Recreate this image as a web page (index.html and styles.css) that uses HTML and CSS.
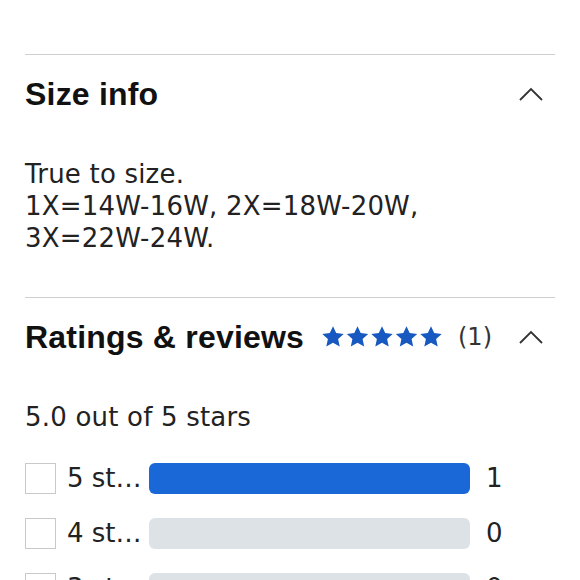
FILE: index.html
```html
<!DOCTYPE html>
<html lang="en">
<head>
<meta charset="utf-8">
<title>Size info and ratings</title>
<link rel="stylesheet" href="styles.css">
</head>
<body>
<main class="page">
  <section class="section">
    <div class="section-head">
      <h2 class="title">Size info</h2>
      <svg class="chevron" viewBox="0 0 24 14" width="24" height="14" aria-hidden="true"><path d="M1 13L12 2l11 11" fill="none" stroke="#333" stroke-width="1.8"/></svg>
    </div>
    <p class="body-text">True to size.<br>1X=14W-16W, 2X=18W-20W,<br>3X=22W-24W.</p>
  </section>
  <section class="section">
    <div class="section-head">
      <h2 class="title">Ratings &amp; reviews</h2>
      <div class="head-meta">
        <svg class="stars" viewBox="0 0 122 22" width="122" height="22" aria-label="5 stars">
          <defs>
            <path id="st" d="M11 0.3l3.2 6.8 7.5 0.8-5.6 5.1 1.6 7.5L11 16.7l-6.7 3.8 1.6-7.5-5.6-5.1 7.5-0.8z"/>
          </defs>
          <use href="#st" x="0" fill="#1759c0"/>
          <use href="#st" x="24.5" fill="#1759c0"/>
          <use href="#st" x="49" fill="#1759c0"/>
          <use href="#st" x="73.5" fill="#1759c0"/>
          <use href="#st" x="98" fill="#1759c0"/>
        </svg>
        <span class="count-total">(1)</span>
        <svg class="chevron" viewBox="0 0 24 14" width="24" height="14" aria-hidden="true"><path d="M1 13L12 2l11 11" fill="none" stroke="#333" stroke-width="1.8"/></svg>
      </div>
    </div>
    <p class="body-text">5.0 out of 5 stars</p>
    <ul class="dist">
      <li class="dist-row"><span class="box"></span><span class="label">5 stars</span><span class="bar"><span class="fill" style="width:100%"></span></span><span class="num">1</span></li>
      <li class="dist-row"><span class="box"></span><span class="label">4 stars</span><span class="bar"><span class="fill" style="width:0%"></span></span><span class="num">0</span></li>
      <li class="dist-row"><span class="box"></span><span class="label">3 stars</span><span class="bar"><span class="fill" style="width:0%"></span></span><span class="num">0</span></li>
      <li class="dist-row"><span class="box"></span><span class="label">2 stars</span><span class="bar"><span class="fill" style="width:0%"></span></span><span class="num">0</span></li>
    </ul>
  </section>
</main>
</body>
</html>
```

FILE: styles.css
```css
html, body {
  margin: 0;
  padding: 0;
  background: #fff;
  height: 580px;
  overflow: hidden;
}
.page {
  padding: 54px 25px 0;
  color: #222;
  font-family: "DejaVu Sans", sans-serif;
}
.section {
  border-top: 1px solid #cfcfcf;
  padding: 19px 0 43px;
}
.section-head {
  display: flex;
  align-items: center;
  justify-content: space-between;
  height: 40px;
}
.title {
  margin: 0;
  font-family: "Liberation Sans", Arial, sans-serif;
  font-weight: 700;
  font-size: 32px;
  line-height: 40px;
  letter-spacing: 0.2px;
  color: #111;
}
.chevron {
  display: block;
  margin-right: 12px;
}
.head-meta {
  display: flex;
  align-items: center;
}
.stars {
  display: block;
  margin-right: 14px;
}
.count-total {
  font-size: 24px;
  line-height: 40px;
  color: #333;
  margin-right: 27px;
}
.body-text {
  margin: 44px 0 0;
  font-size: 26px;
  line-height: 32px;
  letter-spacing: 0.2px;
  color: #222;
}
.dist {
  list-style: none;
  margin: 30px 0 0;
  padding: 0;
  display: flex;
  flex-direction: column;
  gap: 24px;
}
.dist-row {
  display: flex;
  align-items: center;
  height: 31px;
  font-size: 26px;
  line-height: 31px;
}
.box {
  width: 29px;
  height: 29px;
  border: 1px solid #c9c9c9;
  background: #fff;
  flex: none;
}
.label {
  width: 82px;
  margin-left: 11px;
  white-space: nowrap;
  overflow: hidden;
  text-overflow: ellipsis;
  flex: none;
}
.bar {
  flex: 1;
  height: 31px;
  border-radius: 6px;
  background: #dde2e6;
  overflow: hidden;
  display: flex;
}
.fill {
  display: block;
  height: 100%;
  background: #1a68d8;
}
.num {
  width: 69px;
  margin-left: 16px;
  flex: none;
}
```
